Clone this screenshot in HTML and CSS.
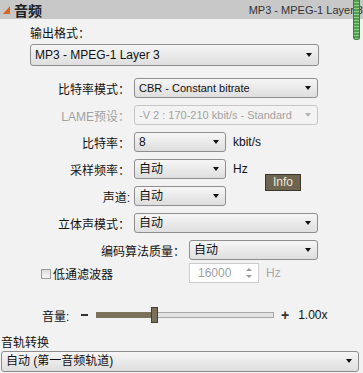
FILE: index.html
```html
<!DOCTYPE html>
<html lang="zh">
<head>
  <meta charset="UTF-8">
  <title>音频</title>
  <link rel="stylesheet" href="styles.css">
</head>
<body>
  <div class="header">
    <span class="tri"></span>
    <span class="title">音频</span>
    <span class="summary">MP3 - MPEG-1 Layer 3</span>
  </div>
  <div class="scroll-thumb"></div>

  <div class="panel">
    <div class="caption indent">输出格式：</div>
    <div class="select big out">MP3 - MPEG-1 Layer 3<i class="arrow"></i></div>

    <div class="rows">
      <div class="row">
        <label>比特率模式：</label>
        <div class="select wide latin">CBR - Constant bitrate<i class="arrow"></i></div>
      </div>
      <div class="row disabled">
        <label>LAME预设：</label>
        <div class="select wide latin">-V 2 : 170-210 kbit/s - Standard<i class="arrow"></i></div>
      </div>

      <div class="group">
        <div class="rows">
          <div class="row">
            <label>比特率：</label>
            <div class="select small">8<i class="arrow"></i></div>
            <span class="unit">kbit/s</span>
          </div>
          <div class="row">
            <label>采样频率：</label>
            <div class="select small">自动<i class="arrow"></i></div>
            <span class="unit">Hz</span>
          </div>
          <div class="row">
            <label>声道:</label>
            <div class="select small">自动<i class="arrow"></i></div>
          </div>
        </div>
        <div class="info">Info</div>
      </div>

      <div class="row">
        <label>立体声模式：</label>
        <div class="select wide">自动<i class="arrow"></i></div>
      </div>
      <div class="row">
        <label class="long">编码算法质量：</label>
        <div class="select quality">自动<i class="arrow"></i></div>
      </div>
    </div>

    <div class="row lowpass">
      <div class="check-wrap"><span class="checkbox"></span>低通滤波器</div>
      <div class="spin">16000<i class="spin-arrows"></i></div>
      <span class="unit grey">Hz</span>
    </div>

    <div class="volume">
      <span class="vol-label">音量:</span>
      <span class="minus"></span>
      <div class="track">
        <div class="fill"></div>
        <div class="thumb"></div>
      </div>
      <span class="plus">+</span>
      <span class="vol-value">1.00x</span>
    </div>

    <div class="caption track-caption">音轨转换</div>
    <div class="select full">自动 (第一音频轨道)<i class="arrow"></i></div>
  </div>
</body>
</html>
```

FILE: styles.css
```css
html, body {
  margin: 0;
  height: 100%;
}
body {
  width: 363px;
  height: 373px;
  overflow: hidden;
  background: #f2f2f2;
  font-family: "Liberation Sans", "Noto Sans CJK SC", sans-serif;
  font-size: 12px;
  color: #111;
  position: relative;
}
.header {
  height: 19px;
  background: #c8c8c8;
  display: flex;
  align-items: center;
  padding-left: 3px;
}
.tri {
  width: 0;
  height: 0;
  border-left: 7px solid transparent;
  border-bottom: 8px solid #d9661c;
  margin-right: 4px;
}
.title {
  font-weight: bold;
  font-size: 14px;
  color: #222;
}
.summary {
  margin-left: auto;
  font-size: 11px;
  color: #333;
  white-space: nowrap;
}
.scroll-thumb {
  position: absolute;
  top: 0;
  right: 3px;
  width: 7px;
  height: 40px;
  border: 1px solid #3d7d3d;
  border-top: none;
  border-radius: 0 0 3px 3px;
  box-sizing: border-box;
  background: repeating-linear-gradient(#4f9f4f 0, #4f9f4f 2px, #8fd08f 2px, #8fd08f 3px);
}

.caption {
  line-height: 16px;
}
.indent {
  margin: 7px 0 2px 30px;
}

.select {
  position: relative;
  box-sizing: border-box;
  height: 20px;
  line-height: 18px;
  padding: 0 16px 0 4px;
  border: 1px solid #8e8e8e;
  border-radius: 3px;
  background: linear-gradient(#f6f6f6, #dedede);
  white-space: nowrap;
  overflow: hidden;
}
.latin {
  font-size: 11px;
}
.arrow {
  position: absolute;
  right: 6px;
  top: 7px;
  width: 0;
  height: 0;
  border-left: 3px solid transparent;
  border-right: 3px solid transparent;
  border-top: 4px solid #111;
}
.big {
  height: 22px;
  line-height: 20px;
}
.out {
  margin-left: 30px;
  width: 289px;
  padding-left: 4px;
}
.big .arrow {
  top: 8px;
}
.wide { width: 184px; }
.small { width: 92px; }
.quality { width: 129px; }
.full {
  margin-left: 1px;
  width: 358px;
  height: 21px;
  line-height: 19px;
}

.rows {
  display: flex;
  flex-direction: column;
  gap: 7px;
}
.panel > .rows {
  margin-top: 12px;
}
.row {
  display: flex;
  align-items: center;
  height: 20px;
}
.row label {
  width: 130px;
  margin-right: 4px;
  text-align: right;
  white-space: nowrap;
}
.row label.long {
  width: 185px;
}
.unit {
  margin-left: 7px;
}
.grey {
  color: #a8a8a8;
}
.disabled label,
.disabled .select {
  color: #a2a2a2;
}
.disabled .select {
  border-color: #c6c6c6;
  background: #f3f3f3;
}
.disabled .arrow {
  border-top-color: #b4b4b4;
}

.group {
  display: flex;
}
.group .rows {
  width: 265px;
}
.info {
  align-self: flex-end;
  margin-bottom: 15px;
  width: 36px;
  height: 17px;
  box-sizing: border-box;
  border: 1px solid #3c3829;
  background: #6d6550;
  color: #ece8dc;
  text-align: center;
  line-height: 15px;
}

.lowpass {
  margin-top: 3px;
}
.check-wrap {
  width: 185px;
  margin-right: 4px;
  display: flex;
  align-items: center;
  padding-left: 41px;
  box-sizing: border-box;
}
.checkbox {
  width: 10px;
  height: 10px;
  box-sizing: border-box;
  border: 1px solid #9a9a9a;
  background: linear-gradient(#dcdcdc, #f8f8f8);
  margin-right: 2px;
  margin-top: 2px;
}
.spin {
  position: relative;
  box-sizing: border-box;
  width: 70px;
  height: 20px;
  line-height: 18px;
  border: 1px solid #cbcbcb;
  background: #fff;
  color: #a0a0a0;
  padding-left: 8px;
}
.spin-arrows::before,
.spin-arrows::after {
  content: "";
  position: absolute;
  right: 6px;
  border-left: 3px solid transparent;
  border-right: 3px solid transparent;
}
.spin-arrows::before {
  top: 4px;
  border-bottom: 3px solid #9a9a9a;
}
.spin-arrows::after {
  top: 11px;
  border-top: 3px solid #9a9a9a;
}

.volume {
  display: flex;
  align-items: center;
  height: 16px;
  margin-top: 24px;
}
.vol-label {
  margin-left: 42px;
  width: 39px;
}
.minus {
  width: 7px;
  height: 2px;
  background: #333;
  margin-right: 8px;
}
.track {
  position: relative;
  width: 178px;
  height: 6px;
  box-sizing: border-box;
  border: 1px solid #a6a6a6;
  background: #e4e4e4;
}
.fill {
  width: 55px;
  height: 6px;
  margin: -1px 0 0 -1px;
  background: #7b715b;
}
.thumb {
  position: absolute;
  left: 54px;
  top: -6px;
  width: 7px;
  height: 16px;
  box-sizing: border-box;
  border: 1px solid #443f30;
  background: #7b715b;
}
.plus {
  margin-left: 7px;
  font-weight: bold;
  font-size: 14px;
  color: #333;
  line-height: 16px;
}
.vol-value {
  margin-left: 9px;
}

.track-caption {
  margin: 12px 0 0 1px;
}
```
